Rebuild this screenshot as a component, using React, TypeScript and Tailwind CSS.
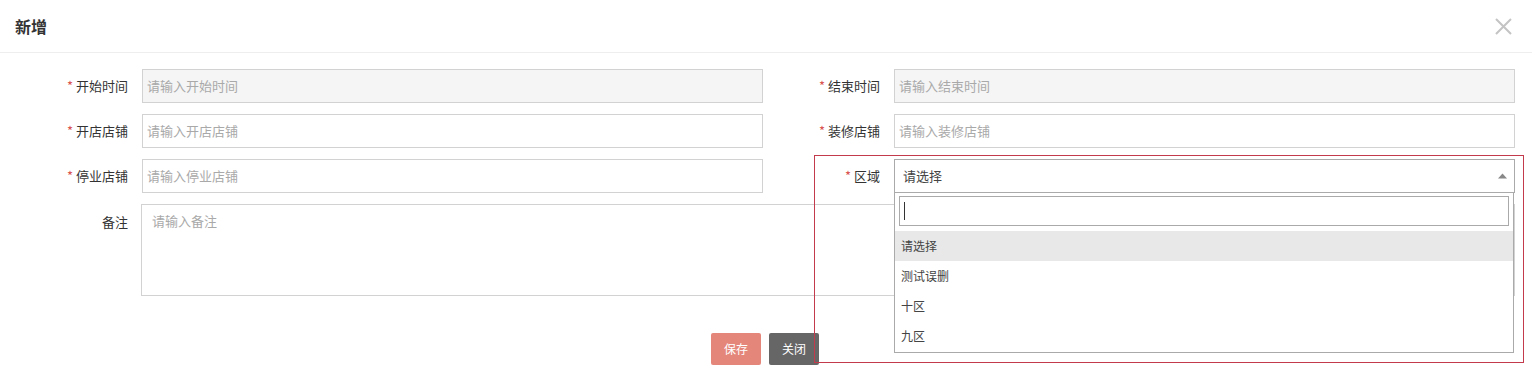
const font = { fontFamily: '"Noto Sans CJK SC", "Noto Sans", sans-serif' };

type FieldProps = {
	label: string;
	placeholder: string;
	required?: boolean;
	disabled?: boolean;
};

function Label({ label, required }: { label: string; required?: boolean }) {
	return (
		<div className="flex h-[34px] items-center justify-end pr-[14px] text-[13px] text-[#333]">
			{required && <span className="mr-[3px] text-[#d9534f]">*</span>}
			{label}
		</div>
	);
}

function Field({ label, placeholder, required, disabled }: FieldProps) {
	return (
		<>
			<Label label={label} required={required} />
			<div
				className={`flex h-[34px] items-center border border-[#d2d2d2] px-[4px] text-[13px] text-[#a9a9a9] ${
					disabled ? "bg-[#f5f5f5]" : "bg-white"
				}`}
			>
				{placeholder}
			</div>
		</>
	);
}

function RegionSelect() {
	const options = ["请选择", "测试误删", "十区", "九区"];
	return (
		<div className="relative h-[34px]">
			<div className="flex h-[34px] items-center justify-between border border-[#aaa] bg-white pl-[8px] pr-[7px] text-[13px] text-[#444]">
				请选择
				<svg width="9" height="6" viewBox="0 0 9 6">
					<path d="M0 5.5 L4.5 0.5 L9 5.5 Z" fill="#888" />
				</svg>
			</div>
			<div className="absolute left-0 right-[1px] top-[33px] z-10 border border-[#aaa] bg-white pb-[1px]">
				<div className="px-[4px] pb-[5px] pt-[3px]">
					<div className="flex h-[30px] items-center border border-[#aaa] px-[4px]">
						<div className="h-[18px] w-px bg-[#333]" />
					</div>
				</div>
				{options.map((o, i) => (
					<div
						key={o}
						className={`flex h-[30px] items-center px-[6px] text-[12px] text-[#444] ${
							i === 0 ? "bg-[#e8e8e8]" : ""
						}`}
					>
						{o}
					</div>
				))}
			</div>
		</div>
	);
}

export default function App() {
	return (
		<div className="relative h-[378px] w-[1532px] bg-white" style={font}>
			<div className="flex h-[53px] items-center justify-between border-b border-[#eee] pl-[15px] pr-[20px]">
				<h3 className="text-[16px] font-bold text-[#333]">新增</h3>
				<svg width="17" height="17" viewBox="0 0 17 17" className="mt-[1px]">
					<path d="M1 1 L16 16 M16 1 L1 16" stroke="#c4c4c4" strokeWidth="2" />
				</svg>
			</div>

			<div className="grid grid-cols-[142px_621px_131px_621px] gap-y-[11px] pt-[16px]">
				<Field label="开始时间" placeholder="请输入开始时间" required disabled />
				<Field label="结束时间" placeholder="请输入结束时间" required disabled />
				<Field label="开店店铺" placeholder="请输入开店店铺" required />
				<Field label="装修店铺" placeholder="请输入装修店铺" required />
				<Field label="停业店铺" placeholder="请输入停业店铺" required />
				<Label label="区域" required />
				<RegionSelect />

				<div className="pr-[14px] pt-[8px] text-right text-[13px] text-[#333]">备注</div>
				<div className="col-span-3 -ml-px h-[92px] border border-[#d2d2d2] px-[10px] py-[6px] text-[13px] text-[#a9a9a9]">
					请输入备注
				</div>
			</div>

			<div className="mr-[2px] mt-[37px] flex justify-center gap-[8px]">
				<button className="h-[32px] w-[50px] rounded-[2px] bg-[#e5867b] text-[12px] text-white">保存</button>
				<button className="h-[32px] w-[50px] rounded-[2px] bg-[#666] text-[12px] text-white">关闭</button>
			</div>

			<div className="pointer-events-none absolute left-[814px] top-[155px] z-20 h-[208px] w-[710px] border border-[#c23a4c]" />
		</div>
	);
}
